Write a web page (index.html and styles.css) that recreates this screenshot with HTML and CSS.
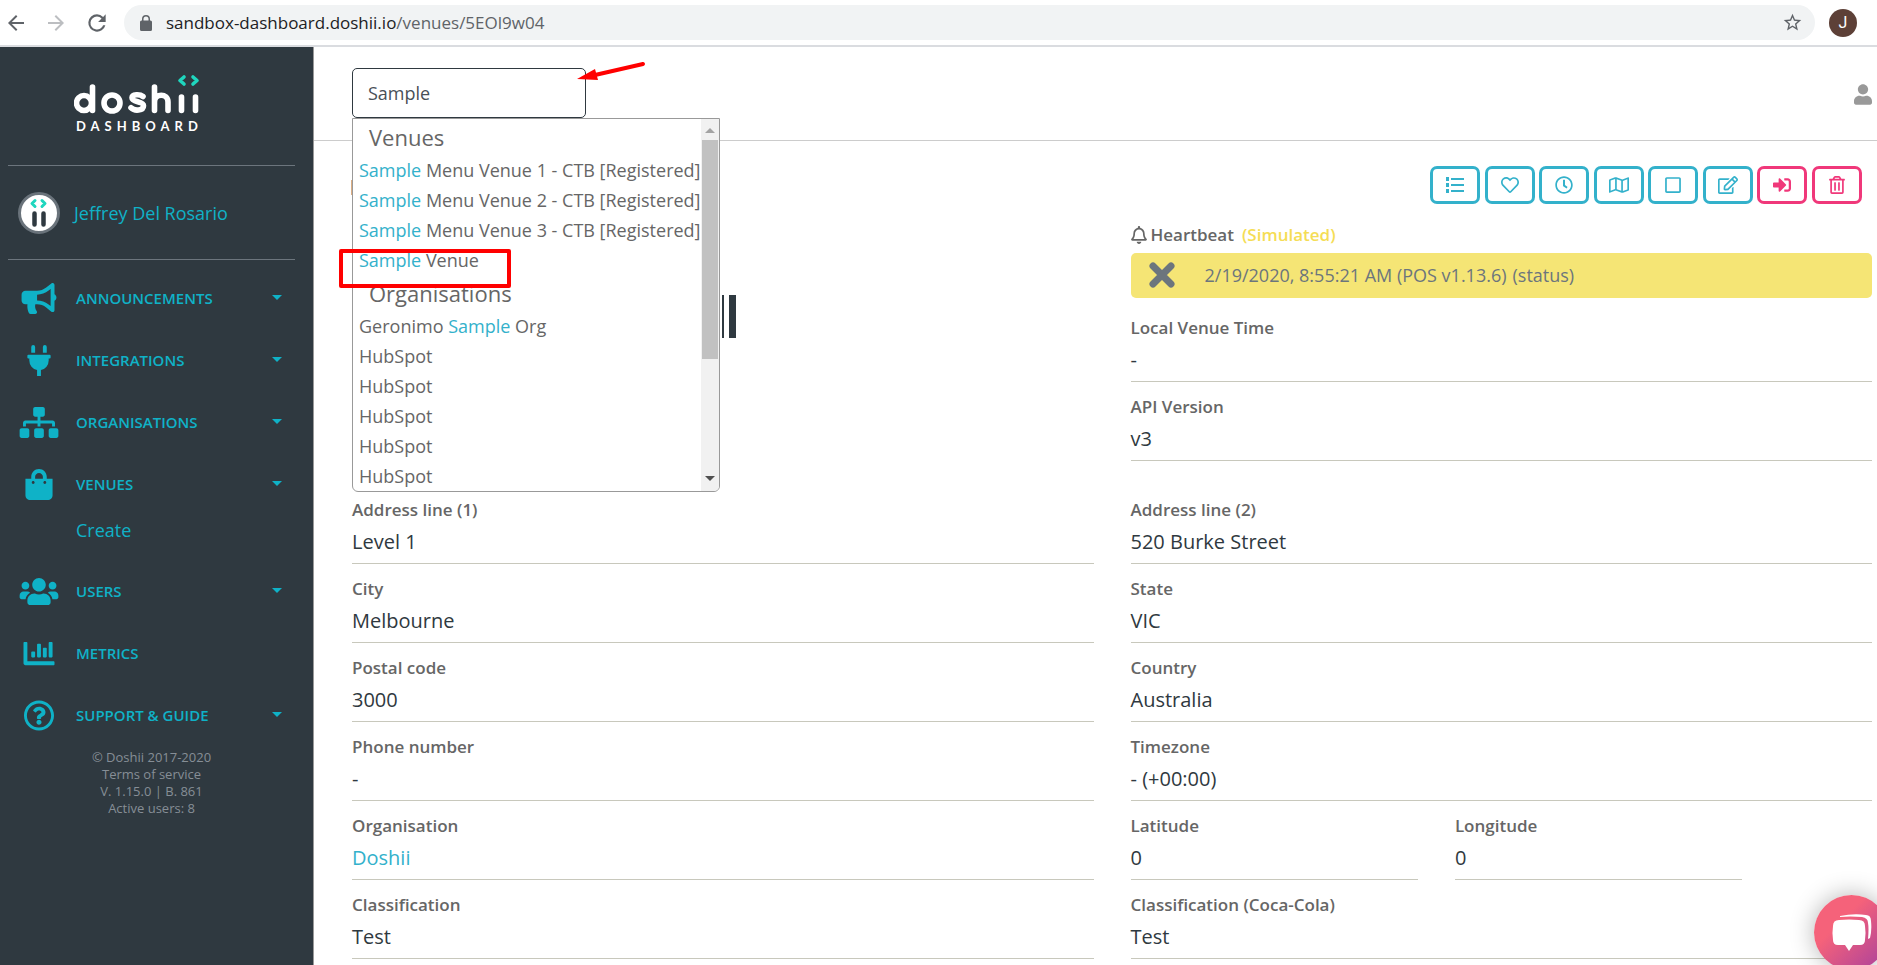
FILE: index.html
```html
<!DOCTYPE html>
<html lang="en">
<head>
<meta charset="utf-8">
<title>Doshii Dashboard</title>
<link rel="stylesheet" href="styles.css">
</head>
<body>
<header class="browser">
  <div class="browser-nav">
    <button class="nav-btn" aria-label="Back"><svg viewBox="0 0 24 24" width="24" height="24" fill="#5f6368"><path d="M20 11H7.8l5.6-5.6L12 4l-8 8 8 8 1.4-1.4L7.8 13H20z"/></svg></button>
    <button class="nav-btn" aria-label="Forward"><svg viewBox="0 0 24 24" width="24" height="24" fill="#bcbec1"><path d="M4 11h12.200l-5.600-5.600L12 4l8 8-8 8-1.400-1.400L16.200 13H4z"/></svg></button>
    <button class="nav-btn" aria-label="Reload"><svg viewBox="0 0 24 24" width="26" height="26" fill="#5f6368"><path d="M17.650 6.350A7.960 7.960 0 0 0 12 4a8 8 0 1 0 7.730 10h-2.080A6 6 0 1 1 12 6c1.660 0 3.140.69 4.220 1.780L13 11h7V4z"/></svg></button>
  </div>
  <div class="omnibox">
    <svg class="lock" viewBox="0 0 12 16" width="12" height="16" fill="#5f6368"><path d="M10.500 5.500H10V4a4 4 0 0 0-8 0v1.500h-.5A1.500 1.500 0 0 0 0 7v7.500A1.500 1.500 0 0 0 1.500 16h9a1.500 1.500 0 0 0 1.500-1.500V7a1.500 1.500 0 0 0-1.500-1.500zM3.500 4a2.500 2.500 0 0 1 5 0v1.500h-5z"/></svg>
    <span class="url">sandbox-dashboard.doshii.io<span class="url-path">/venues/5EOl9w04</span></span>
    <svg class="star" viewBox="0 0 24 24" width="21" height="21" fill="#5f6368"><path d="M22 9.240l-7.190-.62L12 2 9.190 8.630 2 9.240l5.460 4.730L5.820 21 12 17.270 18.180 21l-1.630-7.030zM12 15.400l-3.760 2.270 1-4.280-3.320-2.880 4.380-.38L12 6.100l1.710 4.040 4.380.38-3.320 2.880 1 4.280z"/></svg>
  </div>
  <span class="profile">J</span>
</header>

<div class="app">
  <aside class="sidebar">
    <div class="brand">
      <svg viewBox="0 0 130 64" width="130" height="64" role="img" aria-label="doshii dashboard">
        <g fill="none" stroke="#fff" stroke-width="5.600" stroke-linecap="round">
          <circle cx="10" cy="29" r="7.500"/><path d="M18.500 13v23.500"/>
          <circle cx="38" cy="29" r="8"/>
          <path d="M69 22.500c-3-2.500-11-2.500-11 1.300 0 5.200 11.500 2.700 11.500 8 0 5-9 5.500-12.500 2"/>
          <path d="M80.500 13v23.500M80.500 28c0-9 13.500-9 13.500 0v8.500M107.500 23v13.500M121.500 23v13.500"/>
        </g>
        <g fill="none" stroke="#1fd6be" stroke-width="3.600" stroke-linecap="round" stroke-linejoin="round"><path d="M110 3l-4 3.500 4 3.500M119 3l4 3.500-4 3.500"/></g>
        <text class="brand-sub" x="2" y="57">DASHBOARD</text>
      </svg>
    </div>
    <a class="user" href="#">
      <svg viewBox="0 0 42 42" width="42" height="42" aria-hidden="true">
        <circle cx="21" cy="21" r="19.500" fill="#fff" stroke="#6a737b" stroke-width="3"/>
        <g fill="none" stroke="#1fd6be" stroke-width="3" stroke-linecap="round" stroke-linejoin="round"><path d="M17 8.500l-3 3 3 3M24 8.500l3 3-3 3"/></g>
        <path d="M16.500 21.500v11M25.500 21.500v11" stroke="#2f3940" stroke-width="4.500" stroke-linecap="round"/>
      </svg>
      <span>Jeffrey Del Rosario</span>
    </a>
    <nav class="menu">
      <a class="menu-item" href="#"><svg class="ico" viewBox="0 0 576 512" height="31" width="36"><path d="M576 240c0-23.630-12.950-44.040-32-55.120V32.010C544 23.260 537.020 0 512 0c-7.120 0-14.190 2.380-19.980 7.020l-85.030 68.030C364.280 109.190 310.660 128 256 128H64c-35.350 0-64 28.650-64 64v96c0 35.350 28.650 64 64 64h33.700c-1.390 10.480-2.180 21.140-2.180 32 0 39.770 9.260 77.350 25.560 110.940 5.190 10.690 16.520 17.060 28.400 17.060h74.280c26.050 0 41.690-29.840 25.900-50.560-16.400-21.520-26.150-48.360-26.150-77.440 0-11.110 1.620-21.790 4.410-32H256c54.660 0 108.280 18.810 150.980 52.950l85.030 68.030a32.023 32.023 0 0 0 19.980 7.020c24.920 0 32-22.780 32-32V295.130C563.050 284.040 576 263.630 576 240zm-96 141.420l-33.050-26.440C392.950 311.780 325.120 288 256 288v-96c69.120 0 136.950-23.780 190.950-66.980L480 98.580v282.840z"/></svg><span class="menu-label">Announcements</span><i class="caret"></i></a>
      <a class="menu-item" href="#"><svg class="ico" viewBox="0 0 384 512" height="31" width="24"><path d="M320 32a32 32 0 0 0-64 0v96h64zm48 128H16a16 16 0 0 0-16 16v32a16 16 0 0 0 16 16h16v32a160.070 160.070 0 0 0 128 156.800V512h64v-99.200A160.070 160.070 0 0 0 352 256v-32h16a16 16 0 0 0 16-16v-32a16 16 0 0 0-16-16zM128 32a32 32 0 0 0-64 0v96h64z"/></svg><span class="menu-label">Integrations</span><i class="caret"></i></a>
      <a class="menu-item" href="#"><svg class="ico" viewBox="0 0 640 512" height="31" width="39"><path d="M128 352H32c-17.670 0-32 14.330-32 32v96c0 17.670 14.330 32 32 32h96c17.670 0 32-14.330 32-32v-96c0-17.670-14.330-32-32-32zm-24-80h192v48h48v-48h192v48h48v-57.590c0-21.170-17.230-38.410-38.410-38.410H344v-64h40c17.670 0 32-14.330 32-32V32c0-17.670-14.330-32-32-32H256c-17.670 0-32 14.330-32 32v96c0 17.670 14.330 32 32 32h40v64H94.410C73.230 224 56 241.230 56 262.410V320h48v-48zm264 80h-96c-17.670 0-32 14.330-32 32v96c0 17.670 14.330 32 32 32h96c17.670 0 32-14.330 32-32v-96c0-17.670-14.330-32-32-32zm240 0h-96c-17.670 0-32 14.330-32 32v96c0 17.670 14.330 32 32 32h96c17.670 0 32-14.330 32-32v-96c0-17.670-14.330-32-32-32z"/></svg><span class="menu-label">Organisations</span><i class="caret"></i></a>
      <a class="menu-item" href="#"><svg class="ico" viewBox="0 0 448 512" height="31" width="27"><path d="M352 160v-32C352 57.420 294.579 0 224 0 153.420 0 96 57.420 96 128v32H0v272c0 44.183 35.817 80 80 80h288c44.183 0 80-35.817 80-80V160h-96zm-192-32c0-35.290 28.710-64 64-64s64 28.710 64 64v32H160v-32zm160 120c-13.255 0-24-10.745-24-24s10.745-24 24-24 24 10.745 24 24-10.745 24-24 24zm-192 0c-13.255 0-24-10.745-24-24s10.745-24 24-24 24 10.745 24 24-10.745 24-24 24z"/></svg><span class="menu-label">Venues</span><i class="caret"></i></a>
      <a class="menu-sub" href="#">Create</a>
      <a class="menu-item" href="#"><svg class="ico" viewBox="0 0 640 512" height="31" width="39"><path d="M96 224c35.300 0 64-28.700 64-64s-28.700-64-64-64-64 28.700-64 64 28.700 64 64 64zm448 0c35.300 0 64-28.700 64-64s-28.700-64-64-64-64 28.700-64 64 28.700 64 64 64zm32 32h-64c-17.600 0-33.500 7.100-45.100 18.600 40.300 22.100 68.900 62 75.100 109.400h66c17.700 0 32-14.300 32-32v-32c0-35.300-28.700-64-64-64zm-256 0c61.900 0 112-50.100 112-112S381.900 32 320 32 208 82.100 208 144s50.100 112 112 112zm76.800 32h-8.300c-20.800 10-43.900 16-68.500 16s-47.600-6-68.500-16h-8.300C179.600 288 128 339.600 128 403.200V432c0 26.500 21.500 48 48 48h288c26.500 0 48-21.500 48-48v-28.800c0-63.600-51.600-115.200-115.200-115.200zm-223.700-13.400C161.500 263.100 145.600 256 128 256H64c-35.300 0-64 28.700-64 64v32c0 17.700 14.300 32 32 32h65.900c6.300-47.400 34.900-87.300 75.200-109.400z"/></svg><span class="menu-label">Users</span><i class="caret"></i></a>
      <a class="menu-item" href="#"><svg class="ico" viewBox="0 0 512 512" height="31" width="31"><path d="M332.800 320h38.400c6.400 0 12.800-6.400 12.800-12.800V172.800c0-6.400-6.400-12.800-12.800-12.800h-38.400c-6.400 0-12.800 6.400-12.800 12.800v134.400c0 6.400 6.400 12.800 12.800 12.800zm96 0h38.400c6.400 0 12.800-6.400 12.800-12.800V76.800c0-6.400-6.400-12.800-12.800-12.800h-38.400c-6.400 0-12.800 6.400-12.800 12.800v230.400c0 6.400 6.400 12.800 12.800 12.800zm-288 0h38.400c6.400 0 12.800-6.400 12.800-12.800v-70.400c0-6.400-6.400-12.800-12.800-12.800h-38.400c-6.400 0-12.800 6.400-12.800 12.800v70.400c0 6.400 6.400 12.800 12.800 12.800zm96 0h38.400c6.400 0 12.800-6.400 12.800-12.800V108.800c0-6.400-6.400-12.800-12.800-12.800h-38.400c-6.400 0-12.800 6.400-12.800 12.800v198.400c0 6.400 6.400 12.800 12.800 12.800zM496 384H64V80c0-8.840-7.160-16-16-16H16C7.160 64 0 71.160 0 80v336c0 17.670 14.330 32 32 32h464c8.840 0 16-7.160 16-16v-32c0-8.840-7.160-16-16-16z"/></svg><span class="menu-label">Metrics</span></a>
      <a class="menu-item" href="#"><svg class="ico" viewBox="0 0 512 512" height="31" width="31"><path d="M256 8C119.043 8 8 119.083 8 256c0 136.997 111.043 248 248 248s248-111.003 248-248C504 119.083 392.957 8 256 8zm0 448c-110.532 0-200-89.431-200-200 0-110.495 89.472-200 200-200 110.491 0 200 89.471 200 200 0 110.530-89.431 200-200 200zm107.244-255.200c0 67.052-72.421 68.084-72.421 92.863V300c0 6.627-5.373 12-12 12h-45.647c-6.627 0-12-5.373-12-12v-8.659c0-35.745 27.100-50.034 47.579-61.516 17.561-9.845 28.324-16.541 28.324-29.579 0-17.246-21.999-28.693-39.784-28.693-23.189 0-33.894 10.977-48.942 29.969-4.057 5.120-11.460 6.071-16.666 2.124l-27.824-21.098c-5.107-3.872-6.251-11.066-2.644-16.363C184.846 131.491 214.940 112 261.794 112c49.071 0 101.450 38.304 101.450 88.800zM298 368c0 23.159-18.841 42-42 42s-42-18.841-42-42 18.841-42 42-42 42 18.841 42 42z"/></svg><span class="menu-label">Support &amp; Guide</span><i class="caret"></i></a>
    </nav>
    <footer class="legal">© Doshii 2017-2020<br>Terms of service<br>V. 1.15.0 | B. 861<br>Active users: 8</footer>
  </aside>

  <main class="main">
    <div class="topbar">
      <div class="search">
        <input class="search-input" type="text" value="Sample" aria-label="Search">
        <div class="results">
          <div class="results-list">
            <h2 class="results-title">Venues</h2>
            <a class="result" href="#"><b>Sample</b> Menu Venue 1 - CTB [Registered]</a>
            <a class="result" href="#"><b>Sample</b> Menu Venue 2 - CTB [Registered]</a>
            <a class="result" href="#"><b>Sample</b> Menu Venue 3 - CTB [Registered]</a>
            <a class="result" href="#"><b>Sample</b> Venue</a>
            <h2 class="results-title">Organisations</h2>
            <a class="result" href="#">Geronimo <b>Sample</b> Org</a>
            <a class="result" href="#">HubSpot</a>
            <a class="result" href="#">HubSpot</a>
            <a class="result" href="#">HubSpot</a>
            <a class="result" href="#">HubSpot</a>
            <a class="result" href="#">HubSpot</a>
          </div>
          <div class="scroll" aria-hidden="true"><i class="up"></i><i class="thumb"></i><i class="down"></i></div>
          <i class="mark"></i>
        </div>
        <svg class="arrow" viewBox="0 0 70 22" width="70" height="22" aria-hidden="true"><path d="M66 4L18 15" stroke="#f00" stroke-width="4" stroke-linecap="round"/><path d="M0 19L18 9l3 11z" fill="#f00"/></svg>
      </div>
      <button class="account" aria-label="Account"><svg viewBox="0 0 448 512" width="18" height="21" fill="#999"><path d="M224 256c70.700 0 128-57.300 128-128S294.700 0 224 0 96 57.300 96 128s57.300 128 128 128zm89.600 32h-16.700c-22.200 10.200-46.900 16-72.900 16s-50.600-5.800-72.900-16h-16.700C60.200 288 0 348.200 0 422.400V464c0 26.500 21.500 48 48 48h352c26.500 0 48-21.500 48-48v-41.600c0-74.200-60.200-134.400-134.400-134.400z"/></svg></button>
    </div>

    <div class="content">
      <i class="edge"></i>
      <i class="bars"></i>
      <div class="actions">
        <button class="act" aria-label="List"><svg viewBox="0 0 18 18" width="18" height="18" fill="currentColor"><path d="M0 1h3v4H0zM0 7h3v4H0zM0 13h3v4H0zM5 2h13v2H5zM5 8h13v2H5zM5 14h13v2H5z"/></svg></button>
        <button class="act" aria-label="Favourite"><svg viewBox="0 0 512 512" width="18" height="18" fill="currentColor"><path d="M458.400 64.300C400.600 15.700 311.300 23 256 79.300 200.700 23 111.400 15.600 53.600 64.300-21.600 127.600-10.600 230.800 43 285.500l175.400 178.700c10 10.200 23.400 15.900 37.600 15.900 14.300 0 27.600-5.600 37.600-15.800L469 285.600c53.500-54.700 64.700-157.900-10.600-221.300zm-23.600 187.500L259.400 430.500c-2.400 2.400-4.400 2.400-6.800 0L77.200 251.800c-36.500-37.200-43.900-107.600 7.300-150.700 38.900-32.700 98.900-27.800 136.500 10.500l35 35.700 35-35.700c37.800-38.500 97.800-43.200 136.500-10.600 51.100 43.100 43.500 113.900 7.300 150.800z"/></svg></button>
        <button class="act" aria-label="History"><svg viewBox="0 0 512 512" width="18" height="18" fill="currentColor"><path d="M256 8C119 8 8 119 8 256s111 248 248 248 248-111 248-248S393 8 256 8zm0 448c-110.500 0-200-89.500-200-200S145.500 56 256 56s200 89.500 200 200-89.500 200-200 200zm61.800-104.400l-84.900-61.700c-3.100-2.300-4.900-5.900-4.900-9.700V116c0-6.600 5.400-12 12-12h32c6.600 0 12 5.400 12 12v141.700l66.800 48.600c5.400 3.900 6.500 11.400 2.600 16.800L334.600 349c-3.900 5.300-11.400 6.500-16.800 2.600z"/></svg></button>
        <button class="act" aria-label="Map"><svg viewBox="0 0 576 512" width="20" height="18" fill="currentColor"><path d="M560.020 32c-1.960 0-3.980.37-5.960 1.160L384.010 96H384L212 35.280A64.252 64.252 0 0 0 191.760 32c-6.690 0-13.370 1.050-19.810 3.140L20.120 87.950A32.006 32.006 0 0 0 0 117.660v346.320C0 473.170 7.530 480 15.990 480c1.960 0 3.970-.37 5.960-1.160L192 416l172 60.710a63.980 63.980 0 0 0 40.050.15l151.830-52.810A31.996 31.996 0 0 0 576 394.340V48.020c0-9.190-7.530-16.020-15.980-16.020zM224 90.420l128 45.190v285.970l-128-45.190V90.420zM48 418.050V129.070l128-44.530v286.200l-.64.230L48 418.050zm480-35.130l-128 44.530V141.260l.64-.24L528 93.950v288.970z"/></svg></button>
        <button class="act" aria-label="Square"><svg viewBox="0 0 448 512" width="16" height="18" fill="currentColor"><path d="M400 32H48C21.500 32 0 53.500 0 80v352c0 26.500 21.500 48 48 48h352c26.500 0 48-21.500 48-48V80c0-26.500-21.500-48-48-48zm-6 400H54c-3.300 0-6-2.700-6-6V86c0-3.300 2.700-6 6-6h340c3.300 0 6 2.700 6 6v340c0 3.300-2.700 6-6 6z"/></svg></button>
        <button class="act" aria-label="Edit"><svg viewBox="0 0 576 512" width="20" height="18" fill="currentColor"><path d="M402.300 344.900l32-32c5-5 13.700-1.500 13.700 5.700V464c0 26.500-21.500 48-48 48H48c-26.500 0-48-21.500-48-48V112c0-26.500 21.500-48 48-48h273.500c7.100 0 10.700 8.600 5.700 13.700l-32 32c-1.500 1.500-3.500 2.300-5.700 2.300H48v352h352V350.500c0-2.100.8-4.100 2.300-5.600zm156.600-201.800L296.300 405.700l-90.400 10c-26.200 2.900-48.500-19.200-45.600-45.600l10-90.400L432.900 17.100c22.900-22.900 59.900-22.900 82.700 0l43.200 43.200c22.900 22.900 22.900 60 .1 82.800zM460.100 174L402 115.900 216.200 301.800l-7.300 65.300 65.300-7.300L460.100 174zm64.800-79.700l-43.200-43.200c-4.100-4.100-10.800-4.100-14.800 0L436 82l58.100 58.100 30.900-30.900c4-4.200 4-10.800-.1-14.900z"/></svg></button>
        <button class="act act-danger" aria-label="Sign in"><svg viewBox="0 0 512 512" width="18" height="18" fill="currentColor"><path d="M416 448h-84c-6.600 0-12-5.400-12-12v-40c0-6.600 5.400-12 12-12h84c17.700 0 32-14.300 32-32V160c0-17.700-14.300-32-32-32h-84c-6.600 0-12-5.400-12-12V76c0-6.600 5.400-12 12-12h84c53 0 96 43 96 96v192c0 53-43 96-96 96zm-47-209L201 71c-15-15-41-4.500-41 17v96H24c-13.300 0-24 10.700-24 24v96c0 13.300 10.700 24 24 24h136v96c0 21.500 26 32 41 17l168-168c9.300-9.400 9.300-24.600 0-34z"/></svg></button>
        <button class="act act-danger" aria-label="Delete"><svg viewBox="0 0 448 512" width="16" height="18" fill="currentColor"><path d="M268 416h24a12 12 0 0 0 12-12V188a12 12 0 0 0-12-12h-24a12 12 0 0 0-12 12v216a12 12 0 0 0 12 12zM432 80h-82.410l-34-56.700A48 48 0 0 0 274.410 0H173.590a48 48 0 0 0-41.160 23.300L98.410 80H16A16 16 0 0 0 0 96v16a16 16 0 0 0 16 16h16v336a48 48 0 0 0 48 48h288a48 48 0 0 0 48-48V128h16a16 16 0 0 0 16-16V96a16 16 0 0 0-16-16zM171.840 50.910A6 6 0 0 1 177 48h94a6 6 0 0 1 5.150 2.910L293.610 80H154.390zM368 464H80V128h288zm-212-48h24a12 12 0 0 0 12-12V188a12 12 0 0 0-12-12h-24a12 12 0 0 0-12 12v216a12 12 0 0 0 12 12z"/></svg></button>
      </div>

      <div class="columns status-row">
        <div></div>
        <div>
          <div class="heartbeat-title">
            <svg viewBox="0 0 448 512" width="16" height="18" fill="#666"><path d="M439.390 362.290c-19.320-20.760-55.470-51.990-55.470-154.290 0-77.700-54.480-139.900-127.940-155.160V32c0-17.670-14.320-32-31.980-32s-31.980 14.330-31.980 32v20.840C118.560 68.100 64.080 130.300 64.080 208c0 102.300-36.150 133.530-55.470 154.290-6 6.450-8.660 14.160-8.610 21.710.11 16.400 12.980 32 32.100 32h383.800c19.120 0 32-15.600 32.100-32 .05-7.550-2.610-15.270-8.610-21.710zM67.530 368c21.220-27.970 44.420-74.330 44.530-159.420 0-.2-.06-.38-.06-.58 0-61.860 50.140-112 112-112s112 50.140 112 112c0 .2-.06.38-.06.58.11 85.100 23.310 131.460 44.530 159.420H67.530zM224 512c35.320 0 63.970-28.650 63.970-64H160.030c0 35.350 28.650 64 63.970 64z"/></svg>
            <span class="label">Heartbeat</span><span class="label simulated">(Simulated)</span>
          </div>
          <div class="heartbeat">
            <svg viewBox="0 0 26 26" width="26" height="26" aria-hidden="true"><path d="M4 4l18 18M22 4L4 22" stroke="#6c757d" stroke-width="7" stroke-linecap="round"/></svg>
            <span>2/19/2020, 8:55:21 AM (POS v1.13.6)</span><span>(status)</span>
          </div>
          <div class="field"><span class="label">Local Venue Time</span><span class="value">-</span></div>
          <div class="field"><span class="label">API Version</span><span class="value">v3</span></div>
        </div>
      </div>

      <div class="columns">
        <div class="field"><span class="label">Address line (1)</span><span class="value">Level 1</span></div>
        <div class="field"><span class="label">Address line (2)</span><span class="value">520 Burke Street</span></div>
        <div class="field"><span class="label">City</span><span class="value">Melbourne</span></div>
        <div class="field"><span class="label">State</span><span class="value">VIC</span></div>
        <div class="field"><span class="label">Postal code</span><span class="value">3000</span></div>
        <div class="field"><span class="label">Country</span><span class="value">Australia</span></div>
        <div class="field"><span class="label">Phone number</span><span class="value">-</span></div>
        <div class="field"><span class="label">Timezone</span><span class="value">- (+00:00)</span></div>
        <div class="field"><span class="label">Organisation</span><a class="value link" href="#">Doshii</a></div>
        <div class="coords">
          <div class="field"><span class="label">Latitude</span><span class="value">0</span></div>
          <div class="field"><span class="label">Longitude</span><span class="value">0</span></div>
        </div>
        <div class="field"><span class="label">Classification</span><span class="value">Test</span></div>
        <div class="field"><span class="label">Classification (Coca-Cola)</span><span class="value">Test</span></div>
      </div>
    </div>
  </main>
</div>

<button class="chat" aria-label="Chat">
  <svg viewBox="0 0 40 38" width="40" height="38" fill="#fff"><path d="M7 6Q17 5 27 6Q33 6 33 12Q34 18 33 26Q33 31 28 31H21L17 37L13 31H6Q1 31 1 26Q0 18 1 12Q1 6 7 6z"/><path d="M8 2Q22-1 34 1Q39 1 39 7Q40 16 38 24L36 25Q37 14 36 9Q36 4 30 3Q18 2 8 3z"/></svg>
</button>
</body>
</html>
```
FILE: styles.css
```css
* { box-sizing: border-box; }
body {
  margin: 0;
  height: 100vh;
  overflow: hidden;
  display: flex;
  flex-direction: column;
  font-family: "Open Sans", "Noto Sans", sans-serif;
  font-size: 18px;
  color: #666;
  background: #fff;
}
a { text-decoration: none; color: inherit; }
button { font: inherit; padding: 0; border: 0; background: none; }
svg { display: block; flex: none; }

/* browser bar */
.browser {
  flex: none;
  display: flex;
  align-items: center;
  gap: 14px;
  height: 47px;
  padding: 0 20px 0 4px;
  border-bottom: 2px solid #dadce0;
}
.browser-nav { display: flex; align-items: center; gap: 16px; width: 106px; }
.omnibox {
  flex: 1;
  display: flex;
  align-items: center;
  height: 35px;
  padding: 0 12px 0 16px;
  border-radius: 18px;
  background: #f1f3f4;
}
.url { margin-left: 14px; font-size: 17px; color: #202124; }
.url-path { color: #5f6368; }
.star { margin-left: auto; }
.profile {
  width: 28px;
  height: 28px;
  border-radius: 50%;
  background: #5d4037;
  color: #fff;
  font: 16px/28px Roboto, sans-serif;
  text-align: center;
}

.app { flex: 1; display: flex; min-height: 0; }

/* sidebar */
.sidebar {
  flex: none;
  width: 314px;
  background: #2f3940;
  border-right: 1px solid #999;
  color: #0fb2c7;
}
.brand {
  height: 119px;
  margin: 0 18px 0 8px;
  padding: 27px 0 0 66px;
  border-bottom: 1px solid #6c757d;
}
.brand-sub { font: 700 13px Lato, sans-serif; letter-spacing: 5px; fill: #fff; }
.user {
  display: flex;
  align-items: center;
  gap: 14px;
  height: 94px;
  margin: 0 18px 0 8px;
  padding-left: 10px;
  border-bottom: 1px solid #6c757d;
}
.menu { padding-top: 8px; }
.menu-item { display: flex; align-items: center; height: 62px; padding: 0 31px 2px 17px; }
.ico { fill: currentColor; width: 44px; }
.menu-label {
  flex: 1;
  margin-left: 15px;
  font-size: 15px;
  font-weight: 600;
  text-transform: uppercase;
}
.caret { margin-bottom: 2px; border: 5px solid transparent; border-top-color: currentColor; border-bottom: 0; }
.menu-sub { display: block; height: 45px; padding-left: 76px; line-height: 28px; }
.legal { padding: 2px 10px 0 0; font-size: 13px; line-height: 17px; text-align: center; color: #868e96; }

/* top bar */
.main { flex: 1; min-width: 0; display: flex; flex-direction: column; }
.topbar {
  flex: none;
  display: flex;
  align-items: center;
  justify-content: space-between;
  height: 94px;
  padding: 0 5px 2px 38px;
  border-bottom: 1px solid #ccc;
}
.account { padding-top: 3px; }
.search { position: relative; width: 234px; }
.search-input {
  display: block;
  width: 100%;
  height: 50px;
  padding: 0 15px;
  border: 1px solid #2f3940;
  border-radius: 5px;
  outline: 0;
  font: inherit;
  color: #495057;
  background: #fff;
}
.results {
  position: absolute;
  z-index: 2;
  top: 100%;
  left: 0;
  width: 368px;
  display: flex;
  background: #fff;
  border: 1px solid #999;
  border-radius: 0 0 6px 6px;
}
.results-list { flex: 1; min-width: 0; }
.results-title { margin: 0; padding-left: 16px; font-size: 22px; font-weight: 400; line-height: 36px; }
.result { display: block; padding-left: 6px; line-height: 30px; white-space: nowrap; }
.result b { font-weight: 400; color: #33b1cb; }
.scroll {
  flex: none;
  display: flex;
  flex-direction: column;
  align-items: center;
  width: 18px;
  padding: 9px 0 10px;
  border-radius: 0 0 5px 0;
  background: #f1f1f1;
}
.scroll .up { border: 5px solid transparent; border-bottom-color: #a3a3a3; border-top: 0; }
.scroll .thumb { width: 16px; height: 219px; margin-top: 7px; background: #c1c1c1; }
.scroll .down { margin-top: auto; border: 5px solid transparent; border-top-color: #505050; border-bottom: 0; }
.mark {
  position: absolute;
  top: 130px;
  left: -14px;
  width: 172px;
  height: 39px;
  border: 4px solid #f00;
  border-radius: 2px;
}
.arrow { position: absolute; z-index: 3; top: -8px; left: 225px; }

/* content */
.content { position: relative; padding: 25px 5px 0 38px; }
.edge { position: absolute; top: 39px; left: 37px; width: 1px; height: 15px; background: #dcae84; }
.bars {
  position: absolute;
  top: 154px;
  left: 408px;
  width: 14px;
  height: 43px;
  border-left: 2px solid #2f3940;
  border-right: 7px solid #2f3940;
}
.actions { display: flex; justify-content: space-between; width: 432px; margin: 0 10px 0 auto; }
.act {
  display: flex;
  align-items: center;
  justify-content: center;
  width: 50px;
  height: 38px;
  border: 3px solid #33b1cb;
  border-radius: 7px;
  color: #33b1cb;
}
.act-danger { border-color: #f0387a; color: #f0387a; }
.columns { display: grid; grid-template-columns: 1fr 1fr; column-gap: 37px; }
.status-row { padding: 16px 0 24px; }
.heartbeat-title { display: flex; align-items: center; gap: 4px; height: 33px; padding-bottom: 4px; }
.simulated { margin-left: 4px; color: #f5dd55; }
.heartbeat {
  display: flex;
  align-items: center;
  gap: 6px;
  height: 45px;
  margin-bottom: 5px;
  padding: 0 0 2px 18px;
  border-radius: 5px;
  background: #f5e575;
  color: #6c757d;
  font-weight: 500;
}
.heartbeat svg { margin-right: 24px; }
.field {
  display: flex;
  flex-direction: column;
  height: 79px;
  padding-top: 11px;
  border-bottom: 1px solid #c8c8bc;
}
.label { font-size: 17px; font-weight: 600; line-height: 28px; }
.value { font-size: 20px; line-height: 36px; color: #2f3940; }
.link { color: #33b1cb; }
.coords { display: flex; gap: 37px; }
.coords .field { width: calc((100% + 37px) * 5 / 12 - 37px); }

.chat {
  position: fixed;
  right: -12px;
  bottom: -5px;
  width: 75px;
  height: 75px;
  display: flex;
  align-items: center;
  justify-content: center;
  border-radius: 50%;
  background: linear-gradient(135deg, #f5627a 35%, #a63f9e);
  box-shadow: 0 0 24px rgba(0, 0, 0, 0.3);
}
```
